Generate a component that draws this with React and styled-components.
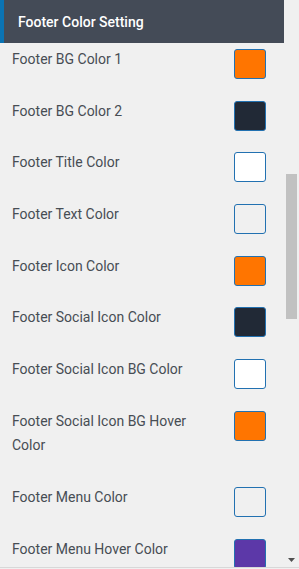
import React from "react";
import styled, { createGlobalStyle } from "styled-components";

const Global = createGlobalStyle`
  html, body { margin: 0; padding: 0; background: #f0f0f0; }
  body { font-family: Roboto, "Liberation Sans", Arial, sans-serif; }
  * { box-sizing: border-box; }
`;

const Frame = styled.div`
  width: 299px;
  height: 569px;
  display: flex;
  flex-direction: column;
  overflow: hidden;
  background: #f0f0f0;
`;

const Body = styled.div`
  height: 567px;
  flex-shrink: 0;
  display: flex;
  flex-direction: row;
  overflow: hidden;
`;

const BottomRule = styled.div`
  height: 1px;
  flex-shrink: 0;
  background: #d8d8d8;
`;

const Main = styled.div`
  width: 284px;
  display: flex;
  flex-direction: column;
  overflow: hidden;
`;

const Header = styled.div`
  height: 43px;
  flex-shrink: 0;
  background: #444b57;
  border-left: 4px solid #0a73b3;
  padding: 0 0 0 14px;
  display: flex;
  align-items: center;
  color: #ffffff;
  font-size: 14px;
  font-weight: 500;
`;

const List = styled.div`
  padding-top: 4px;
  display: flex;
  flex-direction: column;
  flex-shrink: 0;
`;

const Row = styled.div`
  display: flex;
  justify-content: space-between;
  align-items: flex-start;
  padding: 0 18px 0 12px;
  flex-shrink: 0;
`;

const Label = styled.div`
  width: 190px;
  color: #474d54;
  font-size: 14px;
  line-height: 24.5px;
  padding-bottom: 27.2px;
`;

const Swatch = styled.div`
  width: 32px;
  height: 30px;
  margin-top: 2px;
  border: 1px solid #2271b1;
  border-radius: 3px;
  background: ${(p) => p.$color};
  flex-shrink: 0;
`;

const Scrollbar = styled.div`
  width: 15px;
  display: flex;
  flex-direction: column;
  align-items: center;
  background: #f0f0f0;
`;

const Thumb = styled.div`
  width: 11px;
  height: 145px;
  margin-top: 174px;
  background: #c1c1c1;
`;

const Spacer = styled.div`
  flex: 1;
`;

const Arrow = styled.svg`
  width: 15px;
  height: 15px;
  display: block;
`;

const rows = [
  ["Footer BG Color 1", "#ff7500"],
  ["Footer BG Color 2", "#212936"],
  ["Footer Title Color", "#ffffff"],
  ["Footer Text Color", "#f0f0f0"],
  ["Footer Icon Color", "#ff7500"],
  ["Footer Social Icon Color", "#212936"],
  ["Footer Social Icon BG Color", "#ffffff"],
  ["Footer Social Icon BG Hover Color", "#ff7500"],
  ["Footer Menu Color", "#f0f0f0"],
  ["Footer Menu Hover Color", "#5c38a8"],
];

export default function App() {
  return (
    <>
      <Global />
      <Frame>
        <Body>
          <Main>
            <Header>Footer Color Setting</Header>
            <List>
              {rows.map(([label, color]) => (
                <Row key={label}>
                  <Label>{label}</Label>
                  <Swatch $color={color} />
                </Row>
              ))}
            </List>
          </Main>
          <Scrollbar>
            <Thumb />
            <Spacer />
            <Arrow viewBox="0 0 15 15">
              <polygon points="4,6 11,6 7.5,10" fill="#505050" />
            </Arrow>
          </Scrollbar>
        </Body>
        <BottomRule />
      </Frame>
    </>
  );
}
